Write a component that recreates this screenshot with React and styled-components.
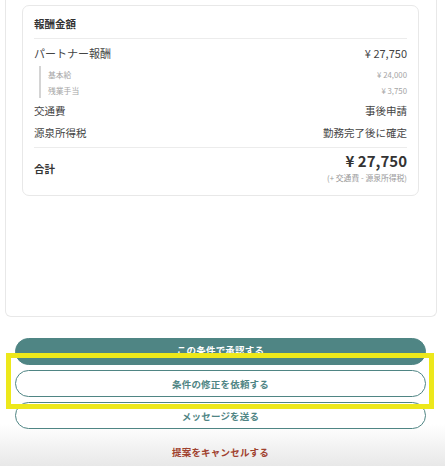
import React from "react";
import styled, { createGlobalStyle } from "styled-components";

const GlobalStyle = createGlobalStyle`
  html, body {
    margin: 0;
    padding: 0;
    background: #fff;
    font-family: "Noto Sans CJK JP", "Noto Sans", sans-serif;
    color: #333;
  }
`;

const Page = styled.div`
  width: 445px;
  height: 466px;
  display: flex;
  flex-direction: column;
  overflow: hidden;
`;

const Panel = styled.div`
  margin: 0 8px 0 5px;
  padding: 5px 17px 120px 16px;
  border: 1px solid #e8e8e8;
  border-top: none;
  border-radius: 0 0 6px 6px;
  background: #fff;
`;

const Card = styled.div`
  border: 1px solid #e8e8e8;
  border-radius: 7px;
  padding: 0 11px;
  background: #fff;
`;

const CardTitle = styled.div`
  padding: 11px 0 7px;
  font-size: 10.5px;
  line-height: 14px;
  font-weight: 700;
  color: #333;
  border-bottom: 1px solid #ececec;
`;

const Row = styled.div`
  display: flex;
  justify-content: space-between;
  align-items: center;
  padding: ${(p) => p.$pad || "3px 0"};
  font-size: ${(p) => p.$size || "10.5px"};
  line-height: 16px;
  color: #444;
`;

const SubList = styled.div`
  margin: 0 0 2px 5px;
  border-left: 2px solid #d4d4d4;
`;

const SubRow = styled.div`
  display: flex;
  justify-content: space-between;
  align-items: center;
  height: 16px;
  padding-left: 7px;
  font-size: 7.8px;
  color: #a5a5a5;
`;

const Divider = styled.div`
  margin-top: 3px;
  border-top: 1px solid #ececec;
`;

const TotalRow = styled.div`
  display: flex;
  justify-content: space-between;
  align-items: center;
  padding: 4px 0 11px;
`;

const TotalLabel = styled.div`
  font-size: 10.5px;
  font-weight: 700;
  color: #333;
`;

const TotalValues = styled.div`
  display: flex;
  flex-direction: column;
  align-items: flex-end;
`;

const TotalAmount = styled.div`
  font-size: 15px;
  line-height: 18px;
  font-weight: 700;
  color: #333;
`;

const TotalNote = styled.div`
  margin-top: 2px;
  font-size: 7.8px;
  line-height: 12px;
  color: #999;
`;

const Footer = styled.div`
  position: relative;
  flex: 1;
  display: flex;
  flex-direction: column;
  gap: 5px;
  padding: 21px 19px 0 15px;
  background: linear-gradient(to bottom, #fff 0%, #fff 72%, #e8e8e8 100%);
`;

const Button = styled.button`
  height: 27px;
  border-radius: 14px;
  border: 1px solid #4f8584;
  background: ${(p) => (p.$primary ? "#4f8584" : "#fff")};
  color: ${(p) => (p.$primary ? "#fff" : "#4f8584")};
  font-family: inherit;
  font-size: 9.5px;
  font-weight: 700;
  letter-spacing: 0.2px;
  cursor: pointer;
  padding: 0 0 ${(p) => (p.$primary ? "3px" : "0")};
`;

const CancelLink = styled.div`
  margin-top: 12px;
  text-align: center;
  font-size: 9.5px;
  line-height: 12px;
  font-weight: 700;
  letter-spacing: 0.2px;
  color: #a0412e;
`;

const Highlight = styled.div`
  position: absolute;
  left: 6px;
  top: 36px;
  width: 418px;
  height: 46px;
  border: 5px solid #ede81b;
  pointer-events: none;
`;

const subItems = [
  { label: "基本給", value: "¥ 24,000" },
  { label: "残業手当", value: "¥ 3,750" },
];

export default function App() {
  return (
    <Page>
      <GlobalStyle />
      <Panel>
        <Card>
          <CardTitle>報酬金額</CardTitle>
          <Row $pad="6px 0 5px" $size="11px">
            <span>パートナー報酬</span>
            <span>¥ 27,750</span>
          </Row>
          <SubList>
            {subItems.map((s) => (
              <SubRow key={s.label}>
                <span>{s.label}</span>
                <span>{s.value}</span>
              </SubRow>
            ))}
          </SubList>
          <Row>
            <span>交通費</span>
            <span>事後申請</span>
          </Row>
          <Row>
            <span>源泉所得税</span>
            <span>勤務完了後に確定</span>
          </Row>
          <Divider />
          <TotalRow>
            <TotalLabel>合計</TotalLabel>
            <TotalValues>
              <TotalAmount>¥ 27,750</TotalAmount>
              <TotalNote>(+ 交通費 - 源泉所得税)</TotalNote>
            </TotalValues>
          </TotalRow>
        </Card>
      </Panel>
      <Footer>
        <Button $primary>この条件で承認する</Button>
        <Button>条件の修正を依頼する</Button>
        <Button>メッセージを送る</Button>
        <CancelLink>提案をキャンセルする</CancelLink>
        <Highlight />
      </Footer>
    </Page>
  );
}
